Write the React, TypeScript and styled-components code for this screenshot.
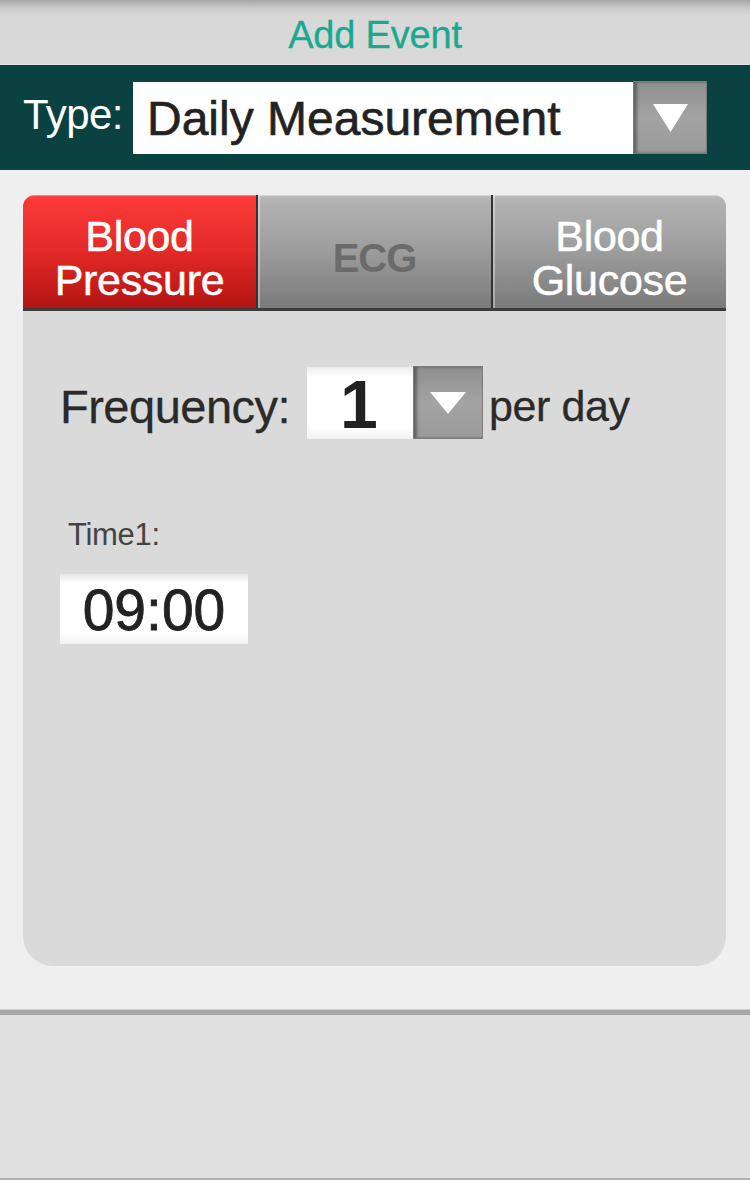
import React from "react";
import styled, { createGlobalStyle } from "styled-components";

const Global = createGlobalStyle`
  html, body { margin: 0; padding: 0; background: #efefef; }
  body { font-family: "Liberation Sans", Arial, sans-serif; }
  #root { width: 750px; height: 1180px; display: flex; flex-direction: column; overflow: hidden; }
`;

const Header = styled.header`
  height: 64px;
  flex: none;
  background: linear-gradient(#a6a6a6 0px, #c9c9c9 8px, #d8d8d8 16px, #d9d9d9 100%);
  border-bottom: 1px solid #e4e4e4;
  display: flex;
  align-items: center;
  justify-content: center;
`;

const Title = styled.h1`
  margin: 6px 0 0;
  font-size: 38px;
  font-weight: 400;
  color: #1aa98f;
  letter-spacing: -0.2px;
  -webkit-text-stroke: 0.3px #1aa98f;
`;

const TypeBar = styled.div`
  height: 105px;
  flex: none;
  background: #0a4141;
  display: flex;
  align-items: center;
  padding-left: 23px;
  box-sizing: border-box;
`;

const TypeLabel = styled.span`
  color: #fff;
  font-size: 42px;
  letter-spacing: -0.6px;
  width: 110px;
  margin-top: -6px;
`;

const SelectBox = styled.div<{ $w: number; $h: number }>`
  width: ${(p) => p.$w}px;
  height: ${(p) => p.$h}px;
  background: #fff;
  display: flex;
  align-items: center;
  box-sizing: border-box;
  flex: none;
`;

const TypeValue = styled.span`
  font-size: 48px;
  color: #222;
  padding-left: 14px;
  padding-top: 2px;
  letter-spacing: 0px;
  -webkit-text-stroke: 0.6px #222;
`;

const DropButton = styled.div<{ $w: number; $h: number }>`
  width: ${(p) => p.$w}px;
  height: ${(p) => p.$h}px;
  box-sizing: border-box;
  background: linear-gradient(#8f8f8f, #a3a3a3 50%, #9a9a9a);
  border: 1px solid #7a7a7a;
  box-shadow: inset 3px 0 3px rgba(0, 0, 0, 0.35);
  display: flex;
  align-items: center;
  justify-content: center;
  flex: none;
`;

const Content = styled.main`
  flex: 1;
  background: #efefef;
  padding: 25px 24px 0 23px;
  box-sizing: border-box;
`;

const Card = styled.section`
  height: 771px;
  background: #dadada;
  border-radius: 12px 12px 30px 30px;
  overflow: hidden;
  display: flex;
  flex-direction: column;
`;

const Tabs = styled.div`
  height: 116px;
  flex: none;
  display: flex;
  border-bottom: 3px solid #3b3b3b;
  box-sizing: border-box;
`;

const Tab = styled.div<{ $active?: boolean; $muted?: boolean }>`
  flex: 1;
  display: flex;
  align-items: center;
  justify-content: center;
  text-align: center;
  font-size: ${(p) => (p.$muted ? 40 : 43)}px;
  line-height: 44px;
  padding-top: ${(p) => (p.$muted ? 12 : 12)}px;
  color: ${(p) => (p.$muted ? "#6b6b6b" : "#fff")};
  font-weight: ${(p) => (p.$muted ? 700 : 400)};
  letter-spacing: ${(p) => (p.$muted ? -1 : -0.3)}px;
  -webkit-text-stroke: ${(p) => (p.$muted ? "0" : "0.5px #fff")};
  background: ${(p) =>
    p.$active
      ? "linear-gradient(#fb4a45 0px, #fb3a37 4px, #e22a27 50%, #b31414 100%)"
      : "linear-gradient(#c2c2c2 0px, #b4b4b4 4px, #9c9c9c 50%, #7a7a7a 100%)"};
  box-shadow: inset 0 1px 0 rgba(255, 255, 255, 0.3);
  & + & {
    border-left: 2px solid #333;
    box-shadow: inset 2px 0 0 rgba(255, 255, 255, 0.35), inset 0 1px 0 rgba(255, 255, 255, 0.3);
  }
`;

const Body = styled.div`
  padding: 55px 0 0 37px;
  display: flex;
  flex-direction: column;
`;

const FreqRow = styled.div`
  display: flex;
  align-items: center;
`;

const FreqLabel = styled.span`
  font-size: 47px;
  color: #2a2a2a;
  letter-spacing: -0.5px;
  width: 247px;
  padding-top: 8px;
  -webkit-text-stroke: 0.3px #2a2a2a;
`;

const NumBox = styled(SelectBox)`
  background: linear-gradient(#ececec 0px, #fff 10px, #fff 60px, #f1f1f1 100%);
  justify-content: center;
`;

const NumValue = styled.span`
  font-size: 68px;
  font-weight: 700;
  color: #222;
  line-height: 1;
  margin-top: 2px;
  margin-right: 2px;
`;

const PerDay = styled.span`
  font-size: 43px;
  color: #2a2a2a;
  margin-left: 6px;
  padding-top: 8px;
  letter-spacing: -0.4px;
  -webkit-text-stroke: 0.3px #2a2a2a;
`;

const TimeLabel = styled.span`
  margin: 78px 0 0 8px;
  font-size: 31px;
  color: #444;
  letter-spacing: -0.3px;
`;

const TimeBox = styled.div`
  width: 188px;
  height: 70px;
  margin-top: 21px;
  background: linear-gradient(#e6e6e6 0px, #fff 9px, #fff 58px, #f2f2f2 100%);
  display: flex;
  align-items: center;
  justify-content: center;
  font-size: 57px;
  color: #222;
  letter-spacing: 0px;
  padding-top: 2px;
  box-sizing: border-box;
  -webkit-text-stroke: 0.8px #222;
`;

const Footer = styled.footer`
  height: 170px;
  flex: none;
  background: #e0e0e0;
  border-top: 5px solid #a6a6a6;
  border-bottom: 2px solid #b0b0b0;
  box-sizing: border-box;
  box-shadow: 0 -1px 0 #cfcfcf;
`;

const Triangle = ({ w, h }: { w: number; h: number }) => (
  <svg width={w} height={h} viewBox={`0 0 ${w} ${h}`}>
    <polygon points={`0,0 ${w},0 ${w / 2},${h}`} fill="#fff" />
  </svg>
);

export default function App() {
  return (
    <>
      <Global />
      <Header>
        <Title>Add Event</Title>
      </Header>
      <TypeBar>
        <TypeLabel>Type:</TypeLabel>
        <SelectBox $w={500} $h={72}>
          <TypeValue>Daily Measurement</TypeValue>
        </SelectBox>
        <DropButton $w={74} $h={73}>
          <Triangle w={35} h={28} />
        </DropButton>
      </TypeBar>
      <Content>
        <Card>
          <Tabs>
            <Tab $active>
              Blood
              <br />
              Pressure
            </Tab>
            <Tab $muted>ECG</Tab>
            <Tab>
              Blood
              <br />
              Glucose
            </Tab>
          </Tabs>
          <Body>
            <FreqRow>
              <FreqLabel>Frequency:</FreqLabel>
              <NumBox $w={106} $h={72}>
                <NumValue>1</NumValue>
              </NumBox>
              <DropButton $w={70} $h={73}>
                <Triangle w={36} h={22} />
              </DropButton>
              <PerDay>per day</PerDay>
            </FreqRow>
            <TimeLabel>Time1:</TimeLabel>
            <TimeBox>09:00</TimeBox>
          </Body>
        </Card>
      </Content>
      <Footer />
    </>
  );
}
